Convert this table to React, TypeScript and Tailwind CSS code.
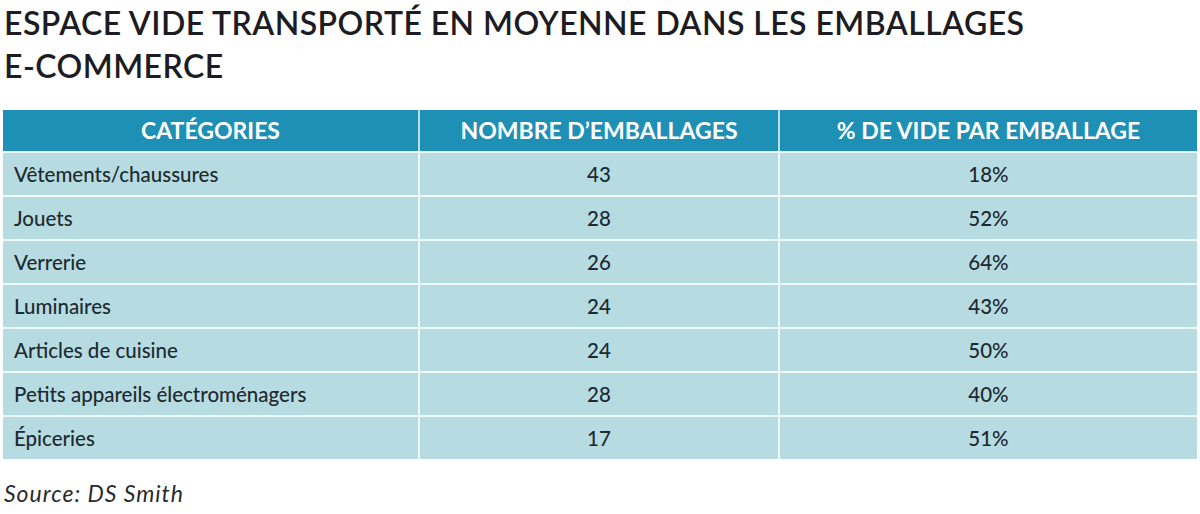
import React from "react"

const ROWS = [
  { cat: "Vêtements/chaussures", count: 43, pct: "18%" },
  { cat: "Jouets", count: 28, pct: "52%" },
  { cat: "Verrerie", count: 26, pct: "64%" },
  { cat: "Luminaires", count: 24, pct: "43%" },
  { cat: "Articles de cuisine", count: 24, pct: "50%" },
  { cat: "Petits appareils électroménagers", count: 28, pct: "40%" },
  { cat: "Épiceries", count: 17, pct: "51%" },
]

export default function App() {
  return (
    <div className="w-[1200px] h-[514px] bg-white font-['Lato',sans-serif] text-[#1e2a30]">
      {/* Title */}
      <h1 className="pl-[4px] pt-[1px] text-[32px] leading-[43px] font-semibold tracking-[0.45px] text-[#1c1c22]">
        ESPACE VIDE TRANSPORTÉ EN MOYENNE DANS LES EMBALLAGES
        <br />
        E-COMMERCE
      </h1>

      {/* Table */}
      <div className="ml-[3px] mt-[23px] w-[1194px]">
        <div className="grid grid-cols-[415px_2px_358px_2px_417px] h-[41px] bg-[#1f90b5] text-white text-[23px] font-bold">
          <div className="flex items-center justify-center">CATÉGORIES</div>
          <div className="bg-white/70" />
          <div className="flex items-center justify-center">NOMBRE D’EMBALLAGES</div>
          <div className="bg-white/70" />
          <div className="flex items-center justify-center">% DE VIDE PAR EMBALLAGE</div>
        </div>
        {ROWS.map((r) => (
          <div
            key={r.cat}
            className="grid grid-cols-[415px_2px_358px_2px_417px] h-[44px] border-t-2 border-[#eef8f9] bg-[#b6dce2] text-[20.5px] font-medium"
          >
            <div className="flex items-center pl-[11px]">{r.cat}</div>
            <div className="bg-[#eef8f9]" />
            <div className="flex items-center justify-center">{r.count}</div>
            <div className="bg-[#eef8f9]" />
            <div className="flex items-center justify-center">{r.pct}</div>
          </div>
        ))}
      </div>

      {/* Source */}
      <p className="pl-[4px] mt-[17px] text-[23px] italic tracking-[1px] text-[#2a2a2e]">Source: DS Smith</p>
    </div>
  )
}
